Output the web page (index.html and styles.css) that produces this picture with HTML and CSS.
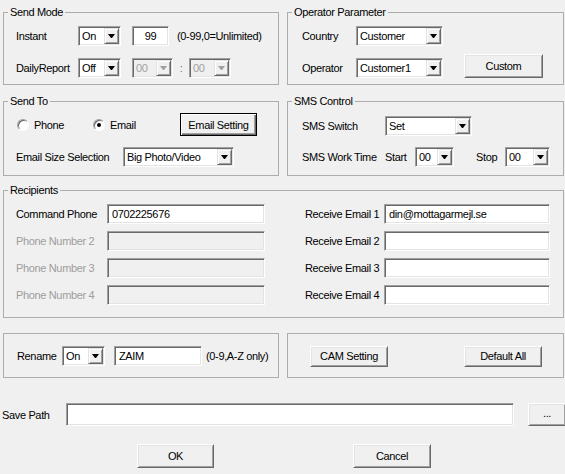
FILE: index.html
```html
<!DOCTYPE html>
<html>
<head>
<meta charset="utf-8">
<title>Settings</title>
<link rel="stylesheet" href="styles.css">
</head>
<body>
<div class="dialog">
  <div class="row r1">
    <div class="group col-left sendmode">
      <span class="group-title">Send Mode</span>
      <div class="line">
        <span class="lbl w62">Instant</span>
        <div class="combo w43"><span class="val">On</span><span class="drop"><i class="arrow"></i></span></div>
        <div class="edit center w37 ml11">99</div>
        <span class="lbl ml8">(0-99,0=Unlimited)</span>
      </div>
      <div class="line">
        <span class="lbl w62">DailyReport</span>
        <div class="combo w43"><span class="val">Off</span><span class="drop"><i class="arrow"></i></span></div>
        <div class="combo disabled w41 ml11"><span class="val">00</span><span class="drop"><i class="arrow"></i></span></div>
        <span class="lbl colon">:</span>
        <div class="combo disabled w42"><span class="val">00</span><span class="drop"><i class="arrow"></i></span></div>
      </div>
    </div>
    <div class="group col-right operator">
      <span class="group-title">Operator Parameter</span>
      <div class="line">
        <span class="lbl w54">Country</span>
        <div class="combo w87"><span class="val">Customer</span><span class="drop"><i class="arrow"></i></span></div>
      </div>
      <div class="line">
        <span class="lbl w54">Operator</span>
        <div class="combo w87"><span class="val">Customer1</span><span class="drop"><i class="arrow"></i></span></div>
        <div class="btn btn-custom">Custom</div>
      </div>
    </div>
  </div>

  <div class="row r2">
    <div class="group col-left sendto">
      <span class="group-title">Send To</span>
      <div class="line line-radio">
        <label class="opt opt-phone"><span class="radio"></span>Phone</label>
        <label class="opt opt-email"><span class="radio checked"></span>Email</label>
        <div class="btn btn-default btn-email">Email Setting</div>
      </div>
      <div class="line line-size">
        <span class="lbl w107">Email Size Selection</span>
        <div class="combo w111"><span class="val">Big Photo/Video</span><span class="drop"><i class="arrow"></i></span></div>
      </div>
    </div>
    <div class="group col-right sms">
      <span class="group-title">SMS Control</span>
      <div class="line">
        <span class="lbl w83">SMS Switch</span>
        <div class="combo w87"><span class="val">Set</span><span class="drop"><i class="arrow"></i></span></div>
      </div>
      <div class="line">
        <span class="lbl w83">SMS Work Time</span>
        <span class="lbl w30">Start</span>
        <div class="combo w39"><span class="val">00</span><span class="drop"><i class="arrow"></i></span></div>
        <span class="lbl w29 ml22">Stop</span>
        <div class="combo w45"><span class="val">00</span><span class="drop"><i class="arrow"></i></span></div>
      </div>
    </div>
  </div>

  <div class="group recipients">
    <span class="group-title">Recipients</span>
    <div class="recip-grid">
      <span class="lbl">Command Phone</span>
      <div class="edit">0702225676</div>
      <span class="lbl right-lbl">Receive Email 1</span>
      <div class="edit">din@mottagarmejl.se</div>

      <span class="lbl dim">Phone Number 2</span>
      <div class="edit off"></div>
      <span class="lbl right-lbl">Receive Email 2</span>
      <div class="edit"></div>

      <span class="lbl dim">Phone Number 3</span>
      <div class="edit off"></div>
      <span class="lbl right-lbl">Receive Email 3</span>
      <div class="edit"></div>

      <span class="lbl dim">Phone Number 4</span>
      <div class="edit off"></div>
      <span class="lbl right-lbl">Receive Email 4</span>
      <div class="edit"></div>
    </div>
  </div>

  <div class="row r4">
    <div class="group col-left rename">
      <span class="lbl w45">Rename</span>
      <div class="combo w43"><span class="val">On</span><span class="drop"><i class="arrow"></i></span></div>
      <div class="edit w88 ml9">ZAIM</div>
      <span class="lbl ml4">(0-9,A-Z only)</span>
    </div>
    <div class="group col-right cam">
      <div class="btn btn-cam">CAM Setting</div>
      <div class="btn btn-cam">Default All</div>
    </div>
  </div>

  <div class="saverow">
    <span class="lbl w64">Save Path</span>
    <div class="edit save-edit"></div>
    <div class="btn btn-browse">...</div>
  </div>

  <div class="actions">
    <div class="btn btn-ok">OK</div>
    <div class="btn btn-cancel">Cancel</div>
  </div>
</div>
</body>
</html>
```
FILE: styles.css
```css
* { box-sizing: border-box; }

body {
  margin: 0;
  background: #f0f0f0;
  font-family: "Liberation Sans", Arial, sans-serif;
  font-size: 11px;
  letter-spacing: -0.35px;
  color: #000;
}

.dialog {
  width: 565px;
  height: 474px;
  padding: 12px 0 0 3px;
  overflow: hidden;
}

.row { display: flex; gap: 8px; }
.r1 { height: 73px; margin-bottom: 16px; }
.r2 { height: 75px; margin-bottom: 14px; }
.r4 { height: 45px; margin-bottom: 25px; }

.group {
  position: relative;
  border: 1px solid #adadad;
  flex: none;
}
.group-title {
  position: absolute;
  top: -7px;
  left: 4px;
  padding: 0 2px;
  background: #f0f0f0;
  line-height: 13px;
  white-space: nowrap;
}
.col-left { width: 276px; }
.col-right { width: 277px; }

.line {
  display: flex;
  align-items: center;
  height: 20px;
}

.lbl { flex: none; white-space: nowrap; }
.dim { color: #9d9d9d; }

.w29 { width: 29px; }
.w30 { width: 30px; }
.w37 { width: 37px; }
.w39 { width: 39px; }
.w41 { width: 41px; }
.w42 { width: 42px; }
.w43 { width: 43px; }
.w45 { width: 45px; }
.w54 { width: 54px; }
.w62 { width: 62px; }
.w64 { width: 64px; }
.w83 { width: 83px; }
.w87 { width: 87px; }
.w88 { width: 88px; }
.w107 { width: 107px; }
.w111 { width: 111px; }
.ml4 { margin-left: 4px; }
.ml8 { margin-left: 8px; }
.ml9 { margin-left: 9px; }
.ml11 { margin-left: 11px; }
.ml22 { margin-left: 22px; }

/* sunken edit box */
.edit {
  flex: none;
  height: 20px;
  background: #fff;
  border: 1px solid;
  border-color: #a0a0a0 #fff #fff #a0a0a0;
  box-shadow: inset 1px 1px 0 #696969, inset -1px -1px 0 #e3e3e3;
  padding: 0 4px;
  line-height: 18px;
  white-space: nowrap;
  overflow: hidden;
}
.edit.center { text-align: center; }
.edit.off { background: #f0f0f0; }

/* combo box */
.combo {
  flex: none;
  display: flex;
  height: 20px;
  background: #fff;
  border: 1px solid;
  border-color: #a0a0a0 #fff #fff #a0a0a0;
  box-shadow: inset 1px 1px 0 #696969, inset -1px -1px 0 #e3e3e3;
}
.combo .val {
  flex: 1;
  padding: 0 0 0 3px;
  line-height: 18px;
  white-space: nowrap;
  overflow: hidden;
}
.combo .drop {
  flex: none;
  width: 15px;
  margin: 1px 1px 1px 0;
  background: #f0f0f0;
  border: 1px solid;
  border-color: #e3e3e3 #696969 #696969 #e3e3e3;
  box-shadow: inset 1px 1px 0 #fff, inset -1px -1px 0 #a0a0a0;
  display: flex;
  align-items: center;
  justify-content: center;
}
.arrow {
  box-sizing: content-box;
  display: block;
  width: 1px;
  height: 0;
  border-left: 3px solid transparent;
  border-right: 3px solid transparent;
  border-top: 4px solid #000;
}
.combo.disabled { background: #f0f0f0; }
.combo.disabled .val { color: #a0a0a0; }
.combo.disabled .arrow { border-top-color: #a0a0a0; }
.colon { width: 16px; text-align: center; color: #6d6d6d; }

/* push button */
.btn {
  flex: none;
  display: flex;
  align-items: center;
  justify-content: center;
  background: #f0f0f0;
  border: 1px solid;
  border-color: #fff #696969 #696969 #fff;
  box-shadow: inset 1px 1px 0 #e3e3e3, inset -1px -1px 0 #a0a0a0;
  white-space: nowrap;
}
.btn-default {
  border: 1px solid #000;
  box-shadow: inset 1px 1px 0 #fff, inset -1px -1px 0 #696969, inset -2px -2px 0 #a0a0a0;
}

/* radio */
.opt { display: flex; align-items: center; gap: 5px; flex: none; }
.radio {
  position: relative;
  width: 12px;
  height: 12px;
  border-radius: 50%;
  background: #fff;
  border: 1px solid;
  border-color: #a0a0a0 #fff #fff #a0a0a0;
  box-shadow: inset 1px 1px 0 #696969;
}
.radio.checked::after {
  content: "";
  position: absolute;
  left: 3px;
  top: 3px;
  width: 4px;
  height: 4px;
  border-radius: 50%;
  background: #000;
}

/* Send Mode */
.sendmode {
  display: flex;
  flex-direction: column;
  gap: 12px;
  padding: 13px 0 0 12px;
}

/* Operator */
.operator {
  display: flex;
  flex-direction: column;
  gap: 12px;
  padding: 13px 0 0 14px;
}
.btn-custom {
  width: 79px;
  height: 24px;
  margin-left: 21px;
  align-self: flex-end;
}

/* Send To */
.sendto {
  display: flex;
  flex-direction: column;
  gap: 11px;
  padding: 11px 0 0 12px;
}
.line-radio { height: 23px; padding-left: 1px; }
.opt-phone { width: 76px; }
.opt-email { width: 87px; }
.btn-email { width: 77px; height: 23px; }

/* SMS */
.sms {
  display: flex;
  flex-direction: column;
  gap: 11px;
  padding: 14px 0 0 14px;
}

/* Recipients */
.recipients {
  width: 561px;
  height: 128px;
  margin-bottom: 15px;
  padding: 13px 0 0 12px;
}
.recip-grid {
  display: grid;
  grid-template-columns: 91px 158px 119px 166px;
  grid-auto-rows: 20px;
  row-gap: 7px;
  align-items: center;
}
.recip-grid .edit { width: 100%; }
.right-lbl { padding-left: 40px; }

/* Rename / CAM */
.rename {
  display: flex;
  align-items: center;
  padding: 1px 0 0 13px;
}
.cam {
  display: flex;
  align-items: center;
  gap: 76px;
  padding: 1px 0 0 22px;
}
.btn-cam { width: 78px; height: 21px; }

/* Save path */
.saverow {
  display: flex;
  align-items: center;
  height: 23px;
  margin: 0 0 18px -1px;
}
.save-edit { width: 448px; height: 23px; }
.btn-browse { width: 38px; height: 23px; margin-left: 14px; padding-bottom: 4px; }

/* OK / Cancel */
.actions {
  display: flex;
  gap: 139px;
  padding-left: 134px;
}
.btn-ok { width: 77px; height: 24px; }
.btn-cancel { width: 78px; height: 24px; }
```
